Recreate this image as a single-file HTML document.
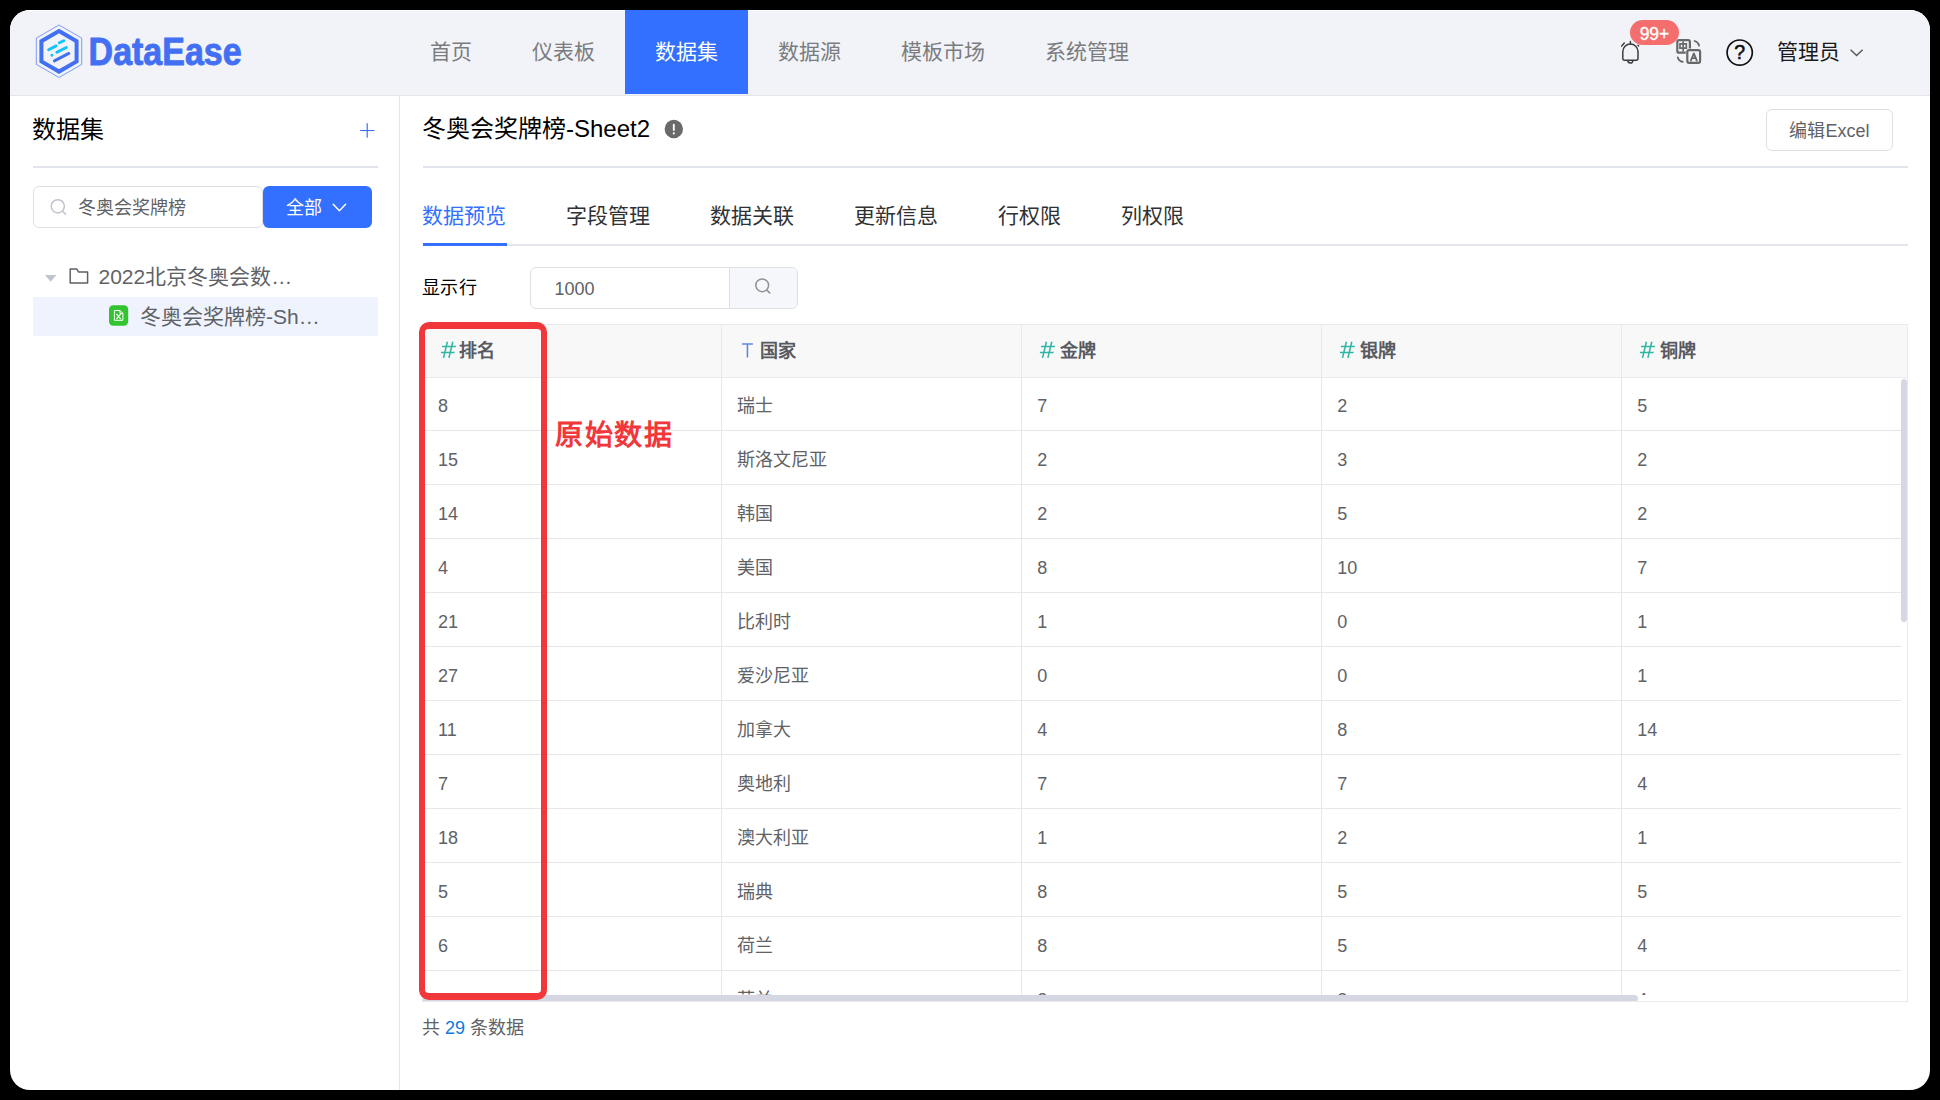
<!DOCTYPE html>
<html lang="zh-CN">
<head>
<meta charset="utf-8">
<title>DataEase</title>
<style>
*{box-sizing:border-box;margin:0;padding:0}
html,body{width:1940px;height:1100px;overflow:hidden;background:#000}
body{font-family:"Liberation Sans",sans-serif;color:#606266;position:relative}
#app{position:absolute;left:10px;top:10px;width:1920px;height:1080px;border-radius:20px;background:#fff;overflow:hidden}
#pg{position:absolute;left:-10px;top:-10px;width:1940px;height:1100px}
.abs{position:absolute}
.t{position:absolute;white-space:nowrap;line-height:1}
/* header */
#hdr{left:10px;top:10px;width:1920px;height:85px;background:#f1f3f8;border-top:1px solid #fff}
#hdrline{left:10px;top:95px;width:1920px;height:1px;background:#e5e5e7}
.nav{top:10px;height:84px;line-height:84.5px;font-size:21px;color:#7b7c7e;text-align:center}
.nav.on{background:#3370ff;color:#fff}
/* sidebar */
#sideline{left:399px;top:96px;width:1px;height:994px;background:#e6e6e6}
.hr{height:2px;background:#e1e4ec}
/* tabs */
.tab{top:205px;font-size:21px;color:#303133}
/* table */
#tbl{left:422px;top:324px;width:1486px;height:678px;border:1px solid #e8eaec;overflow:hidden;background:#fff}
#thead{left:0;top:0;width:1484px;height:53px;background:#f8f8f9;border-bottom:1px solid #e8eaec}
.vl{top:0;width:1px;height:670px;background:#e6e8eb}
.hl{left:0;width:1478px;height:1px;background:#e5e7eb}
.th{top:17.4px;font-size:18px;font-weight:bold;color:#585a5f}
.th i{font-style:normal;font-weight:normal;color:#2bb5a0;margin-right:5px;font-size:19px}
.th i.tx{color:#4a8af4}
.td{font-size:18px;color:#606266}
</style>
</head>
<body>
<div id="app"><div id="pg">

<!-- ===== header ===== -->
<div id="hdr" class="abs"></div>
<div id="hdrline" class="abs"></div>

<svg class="abs" style="left:30px;top:20px" width="220" height="64" viewBox="30 20 220 64">
<polygon points="59,25 81.7,38.1 81.7,64.4 59,77.5 36.3,64.4 36.3,38.1" fill="none" stroke="#4a76f3" stroke-width="0.7"/>
<polygon points="59,31 76.6,41.15 76.6,61.45 59,71.6 41.4,61.45 41.4,41.15" fill="#f1f3f8" stroke="#4370f2" stroke-width="4"/>
<g fill="none" stroke-width="2.9" stroke-linecap="round">
<path d="M48.6 49.7L56.2 45.9M59.4 42.8L63.8 40.8M51.9 55.2L52 55.15M56.9 52.2L66.3 47.5" stroke="#10c3fd"/>
<path d="M54.4 60.9L68.8 53.4" stroke="#4370f2"/>
</g>
<text x="88.6" y="64.6" font-family="Liberation Sans, sans-serif" font-weight="700" font-size="39.6" fill="#4370f2" stroke="#4370f2" stroke-width="0.9" stroke-linejoin="round" textLength="153" lengthAdjust="spacingAndGlyphs">DataEase</text>
</svg>
<div class="abs nav" style="left:400px;width:102px">首页</div>
<div class="abs nav" style="left:502px;width:123px">仪表板</div>
<div class="abs nav on" style="left:625px;width:123px">数据集</div>
<div class="abs nav" style="left:748px;width:123px">数据源</div>
<div class="abs nav" style="left:871px;width:144px">模板市场</div>
<div class="abs nav" style="left:1015px;width:144px">系统管理</div>
<svg class="abs" style="left:1610px;top:14px" width="270" height="60" viewBox="1610 14 270 60">
<g fill="none" stroke="#3c3c3c" stroke-width="1.5" stroke-linecap="round" stroke-linejoin="round">
<path d="M1622.8 58.6V51.6a7.6 7.6 0 0 1 15.2 0V58.6a1.6 1.6 0 0 1-1.6 1.6H1624.4a1.6 1.6 0 0 1-1.6-1.6z"/>
<path d="M1630.4 41.6V44M1627.9 60.6a2.5 2.5 0 0 0 5 0M1621.7 45.9l2.6-2.8M1638.6 45.9l-0.6-0.7"/>
</g>
<g fill="none" stroke="#686868" stroke-width="2.2" stroke-linecap="round">
<rect x="1677.3" y="40.1" width="12.6" height="12.6" rx="1.8"/>
<rect x="1687.3" y="50.1" width="12.8" height="12.8" rx="1.8" fill="#f1f3f8" stroke="#f1f3f8" stroke-width="3.1"/>
<rect x="1687.3" y="50.1" width="12.8" height="12.8" rx="1.8" fill="#f1f3f8"/>
<path d="M1680 43.9h6.3v4.2h-6.3zM1683.15 41.9v8.9" stroke-width="1.7"/>
<path d="M1690.9 60.7l2.95-7.3 2.95 7.3M1692 58.2h3.7" stroke-width="1.8" stroke-linejoin="round"/>
<path d="M1694.6 41a6.4 6.4 0 0 1 4.6 4.7M1677.7 57.3a6.4 6.4 0 0 0 5.1 4.6" stroke-width="1.8"/>
</g>
<circle cx="1739.7" cy="52.6" r="12.6" fill="none" stroke="#111" stroke-width="1.7"/>
<path d="M1850.6 49.8l6 5.8 6-5.8" fill="none" stroke="#555" stroke-width="1.4"/>
</svg>
<div class="abs" style="left:1629.7px;top:20.2px;width:49.6px;height:25px;border-radius:13px;background:#f56e6e;color:#fff;font-size:17.5px;line-height:29.4px;text-align:center;-webkit-text-stroke:0.35px #fff;overflow:hidden">99+</div>
<div class="t" style="left:1732.7px;top:43.3px;width:14px;text-align:center;font-size:19.5px;color:#111;-webkit-text-stroke:0.55px #111">?</div>
<div class="t" style="left:1777px;top:41px;font-size:21px;color:#1a1a1a">管理员</div>

<!-- ===== sidebar ===== -->
<div id="sideline" class="abs"></div>
<div class="t" style="left:32px;top:118px;font-size:24px;color:#000">数据集</div>
<svg class="abs" style="left:358px;top:121px" width="20" height="20" viewBox="358 121 20 20"><path d="M367.2 123.3v14.4M360 130.5h14.4" stroke="#3370ff" stroke-width="1.2" fill="none"/></svg>
<div class="abs hr" style="left:33px;top:166px;width:345px"></div>
<div class="abs" style="left:33px;top:186px;width:230px;height:42px;border:1px solid #dcdfe6;border-radius:6px;background:#fff"></div>
<svg class="abs" style="left:48px;top:196px" width="22" height="22" viewBox="48 196 22 22"><circle cx="57.8" cy="206.3" r="6.6" fill="none" stroke="#c0c4cc" stroke-width="1.5"/><path d="M62.6 211.2l3 3" stroke="#c0c4cc" stroke-width="1.5" stroke-linecap="round"/></svg>
<div class="t" style="left:78px;top:199px;font-size:18px;color:#606266">冬奥会奖牌榜</div>
<div class="abs" style="left:263px;top:186px;width:109px;height:42px;border-radius:6px;background:#3370ff"></div>
<div class="t" style="left:286px;top:199px;font-size:18px;color:#fff">全部</div>
<svg class="abs" style="left:330px;top:200px" width="20" height="16" viewBox="330 200 20 16"><path d="M333.2 204.3l6.2 6.4 6.2-6.4" fill="none" stroke="#fff" stroke-width="1.5" stroke-linecap="round" stroke-linejoin="round"/></svg>
<svg class="abs" style="left:40px;top:262px" width="56" height="28" viewBox="40 262 56 28"><path d="M45 275h11.4l-5.7 6.8z" fill="#c0c4cc"/><path d="M70.2 269.1h6.6l1.9 3h8.9v11H70.2z" fill="none" stroke="#5d6066" stroke-width="1.5" stroke-linejoin="round"/></svg>
<div class="t" style="left:98.5px;top:266.4px;font-size:21px;color:#606266">2022北京冬奥会数…</div>
<div class="abs" style="left:33px;top:297px;width:345px;height:39px;background:#eef3fe"></div>
<svg class="abs" style="left:108px;top:304px" width="22" height="24" viewBox="108 304 22 24"><rect x="109" y="305.2" width="19.2" height="20.6" rx="4.2" fill="#33c52f"/><path d="M114.4 310.5h5.6l2.9 2.9v6.9h-8.5zM120 310.5v2.9h2.9" fill="none" stroke="#fff" stroke-width="1" stroke-linejoin="round"/><path d="M116.4 313.9l4.4 5.2M120.8 313.9l-4.4 5.2" stroke="#fff" stroke-width="1.15" fill="none"/></svg>
<div class="t" style="left:140px;top:306px;font-size:21px;color:#606266">冬奥会奖牌榜-Sh…</div>

<!-- ===== main ===== -->
<div class="t" style="left:422px;top:117px;font-size:24px;color:#000">冬奥会奖牌榜-Sheet2</div>
<svg class="abs" style="left:662px;top:118px" width="24" height="24" viewBox="662 118 24 24"><circle cx="673.8" cy="129" r="9.2" fill="#6a6a6a"/><path d="M673.8 124.7v5.3" stroke="#fff" stroke-width="1.9" stroke-linecap="round"/><circle cx="673.8" cy="133.4" r="1.1" fill="#fff"/></svg>
<div class="abs" style="left:1766px;top:109px;width:127px;height:42px;border:1px solid #dcdfe6;border-radius:6px;background:#fff;font-size:18px;color:#606266;text-align:center;line-height:42px">编辑Excel</div>
<div class="abs hr" style="left:423px;top:166px;width:1485px"></div>
<div class="t tab" style="left:422px;color:#3370ff">数据预览</div>
<div class="t tab" style="left:566px">字段管理</div>
<div class="t tab" style="left:710px">数据关联</div>
<div class="t tab" style="left:854px">更新信息</div>
<div class="t tab" style="left:998px">行权限</div>
<div class="t tab" style="left:1121px">列权限</div>
<div class="abs" style="left:423px;top:244px;width:1485px;height:2px;background:#e4e7ed"></div>
<div class="abs" style="left:423px;top:243px;width:84px;height:3px;background:#3370ff"></div>
<div class="t" style="left:422px;top:279.3px;font-size:18px;color:#000;letter-spacing:0.4px">显示行</div>
<div class="abs" style="left:530px;top:267px;width:268px;height:42px;border:1px solid #dcdfe6;border-radius:6px;background:#fff;overflow:hidden"><div class="abs" style="left:198px;top:0;width:69px;height:40px;background:#f5f7fa;border-left:1px solid #dcdfe6"></div></div>
<div class="t" style="left:554.5px;top:279.6px;font-size:18px;color:#606266">1000</div>
<svg class="abs" style="left:752.4px;top:275.2px" width="22" height="22" viewBox="752 276 22 22"><circle cx="762.2" cy="286.3" r="6.4" fill="none" stroke="#909399" stroke-width="1.5"/><path d="M766.9 291.1l2.8 2.8" stroke="#909399" stroke-width="1.5" stroke-linecap="round"/></svg>
<div class="t" style="left:422px;top:1019.2px;font-size:18px;color:#606266">共 <span style="color:#0a7be0">29</span> 条数据</div>

<!-- ===== table ===== -->
<div id="tbl" class="abs">
<div id="thead" class="abs"></div>
<div class="abs vl" style="left:298px"></div>
<div class="abs vl" style="left:598px"></div>
<div class="abs vl" style="left:898px"></div>
<div class="abs vl" style="left:1198px"></div>
<div class="abs hl" style="top:105px"></div>
<div class="abs hl" style="top:159px"></div>
<div class="abs hl" style="top:213px"></div>
<div class="abs hl" style="top:267px"></div>
<div class="abs hl" style="top:321px"></div>
<div class="abs hl" style="top:375px"></div>
<div class="abs hl" style="top:429px"></div>
<div class="abs hl" style="top:483px"></div>
<div class="abs hl" style="top:537px"></div>
<div class="abs hl" style="top:591px"></div>
<div class="abs hl" style="top:645px"></div>
<div class="abs hl" style="top:699px"></div>
<svg class="abs" style="left:17px;top:15px" width="18" height="20" viewBox="0 0 18 20"><path d="M7.4 1.8L3.5 17.9M12.8 1.8L8.9 17.9M2 6.5H15.9M0.9 12.4H14.6" fill="none" stroke="#33b5a6" stroke-width="1.55"/></svg>
<div class="t th" style="left:36.2px">排名</div>
<svg class="abs" style="left:316.6px;top:15px" width="18" height="20" viewBox="0 0 18 20"><path d="M2 3.9H12.9M7.45 3.9V17.5" fill="none" stroke="#5b86e2" stroke-width="1.55"/></svg>
<div class="t th" style="left:336.5px">国家</div>
<svg class="abs" style="left:616px;top:15px" width="18" height="20" viewBox="0 0 18 20"><path d="M7.4 1.8L3.5 17.9M12.8 1.8L8.9 17.9M2 6.5H15.9M0.9 12.4H14.6" fill="none" stroke="#33b5a6" stroke-width="1.55"/></svg>
<div class="t th" style="left:636.5px">金牌</div>
<svg class="abs" style="left:916px;top:15px" width="18" height="20" viewBox="0 0 18 20"><path d="M7.4 1.8L3.5 17.9M12.8 1.8L8.9 17.9M2 6.5H15.9M0.9 12.4H14.6" fill="none" stroke="#33b5a6" stroke-width="1.55"/></svg>
<div class="t th" style="left:936.5px">银牌</div>
<svg class="abs" style="left:1216px;top:15px" width="18" height="20" viewBox="0 0 18 20"><path d="M7.4 1.8L3.5 17.9M12.8 1.8L8.9 17.9M2 6.5H15.9M0.9 12.4H14.6" fill="none" stroke="#33b5a6" stroke-width="1.55"/></svg>
<div class="t th" style="left:1236.5px">铜牌</div>
<div class="t td" style="left:15px;top:72px">8</div>
<div class="t td" style="left:314.3px;top:72px">瑞士</div>
<div class="t td" style="left:614.3px;top:72px">7</div>
<div class="t td" style="left:914.3px;top:72px">2</div>
<div class="t td" style="left:1214.3px;top:72px">5</div>
<div class="t td" style="left:15px;top:126px">15</div>
<div class="t td" style="left:314.3px;top:126px">斯洛文尼亚</div>
<div class="t td" style="left:614.3px;top:126px">2</div>
<div class="t td" style="left:914.3px;top:126px">3</div>
<div class="t td" style="left:1214.3px;top:126px">2</div>
<div class="t td" style="left:15px;top:180px">14</div>
<div class="t td" style="left:314.3px;top:180px">韩国</div>
<div class="t td" style="left:614.3px;top:180px">2</div>
<div class="t td" style="left:914.3px;top:180px">5</div>
<div class="t td" style="left:1214.3px;top:180px">2</div>
<div class="t td" style="left:15px;top:234px">4</div>
<div class="t td" style="left:314.3px;top:234px">美国</div>
<div class="t td" style="left:614.3px;top:234px">8</div>
<div class="t td" style="left:914.3px;top:234px">10</div>
<div class="t td" style="left:1214.3px;top:234px">7</div>
<div class="t td" style="left:15px;top:288px">21</div>
<div class="t td" style="left:314.3px;top:288px">比利时</div>
<div class="t td" style="left:614.3px;top:288px">1</div>
<div class="t td" style="left:914.3px;top:288px">0</div>
<div class="t td" style="left:1214.3px;top:288px">1</div>
<div class="t td" style="left:15px;top:342px">27</div>
<div class="t td" style="left:314.3px;top:342px">爱沙尼亚</div>
<div class="t td" style="left:614.3px;top:342px">0</div>
<div class="t td" style="left:914.3px;top:342px">0</div>
<div class="t td" style="left:1214.3px;top:342px">1</div>
<div class="t td" style="left:15px;top:396px">11</div>
<div class="t td" style="left:314.3px;top:396px">加拿大</div>
<div class="t td" style="left:614.3px;top:396px">4</div>
<div class="t td" style="left:914.3px;top:396px">8</div>
<div class="t td" style="left:1214.3px;top:396px">14</div>
<div class="t td" style="left:15px;top:450px">7</div>
<div class="t td" style="left:314.3px;top:450px">奥地利</div>
<div class="t td" style="left:614.3px;top:450px">7</div>
<div class="t td" style="left:914.3px;top:450px">7</div>
<div class="t td" style="left:1214.3px;top:450px">4</div>
<div class="t td" style="left:15px;top:504px">18</div>
<div class="t td" style="left:314.3px;top:504px">澳大利亚</div>
<div class="t td" style="left:614.3px;top:504px">1</div>
<div class="t td" style="left:914.3px;top:504px">2</div>
<div class="t td" style="left:1214.3px;top:504px">1</div>
<div class="t td" style="left:15px;top:558px">5</div>
<div class="t td" style="left:314.3px;top:558px">瑞典</div>
<div class="t td" style="left:614.3px;top:558px">8</div>
<div class="t td" style="left:914.3px;top:558px">5</div>
<div class="t td" style="left:1214.3px;top:558px">5</div>
<div class="t td" style="left:15px;top:612px">6</div>
<div class="t td" style="left:314.3px;top:612px">荷兰</div>
<div class="t td" style="left:614.3px;top:612px">8</div>
<div class="t td" style="left:914.3px;top:612px">5</div>
<div class="t td" style="left:1214.3px;top:612px">4</div>
<div class="t td" style="left:15px;top:666px">16</div>
<div class="t td" style="left:314.3px;top:666px">芬兰</div>
<div class="t td" style="left:614.3px;top:666px">2</div>
<div class="t td" style="left:914.3px;top:666px">2</div>
<div class="t td" style="left:1214.3px;top:666px">4</div>
<div class="abs" style="left:1478px;top:54px;width:6px;height:243px;border-radius:3px;background:#d5d8e3"></div>
<div class="abs" style="left:0;top:670px;width:1484px;height:7px;background:#fff"></div>
<div class="abs" style="left:-4px;top:670px;width:1219px;height:7px;border-radius:3.5px;background:#d5d8e3"></div>
</div>

<!-- ===== annotation ===== -->
<div class="abs" style="left:419px;top:321.5px;width:128px;height:678.5px;border:solid #f2373b;border-width:7px 6.2px 7px 6.4px;border-radius:10px"></div>
<div class="t" style="left:555px;top:422px;font-size:28px;letter-spacing:1.5px;font-weight:bold;color:#f2373b">原始数据</div>

</div></div>
</body>
</html>
